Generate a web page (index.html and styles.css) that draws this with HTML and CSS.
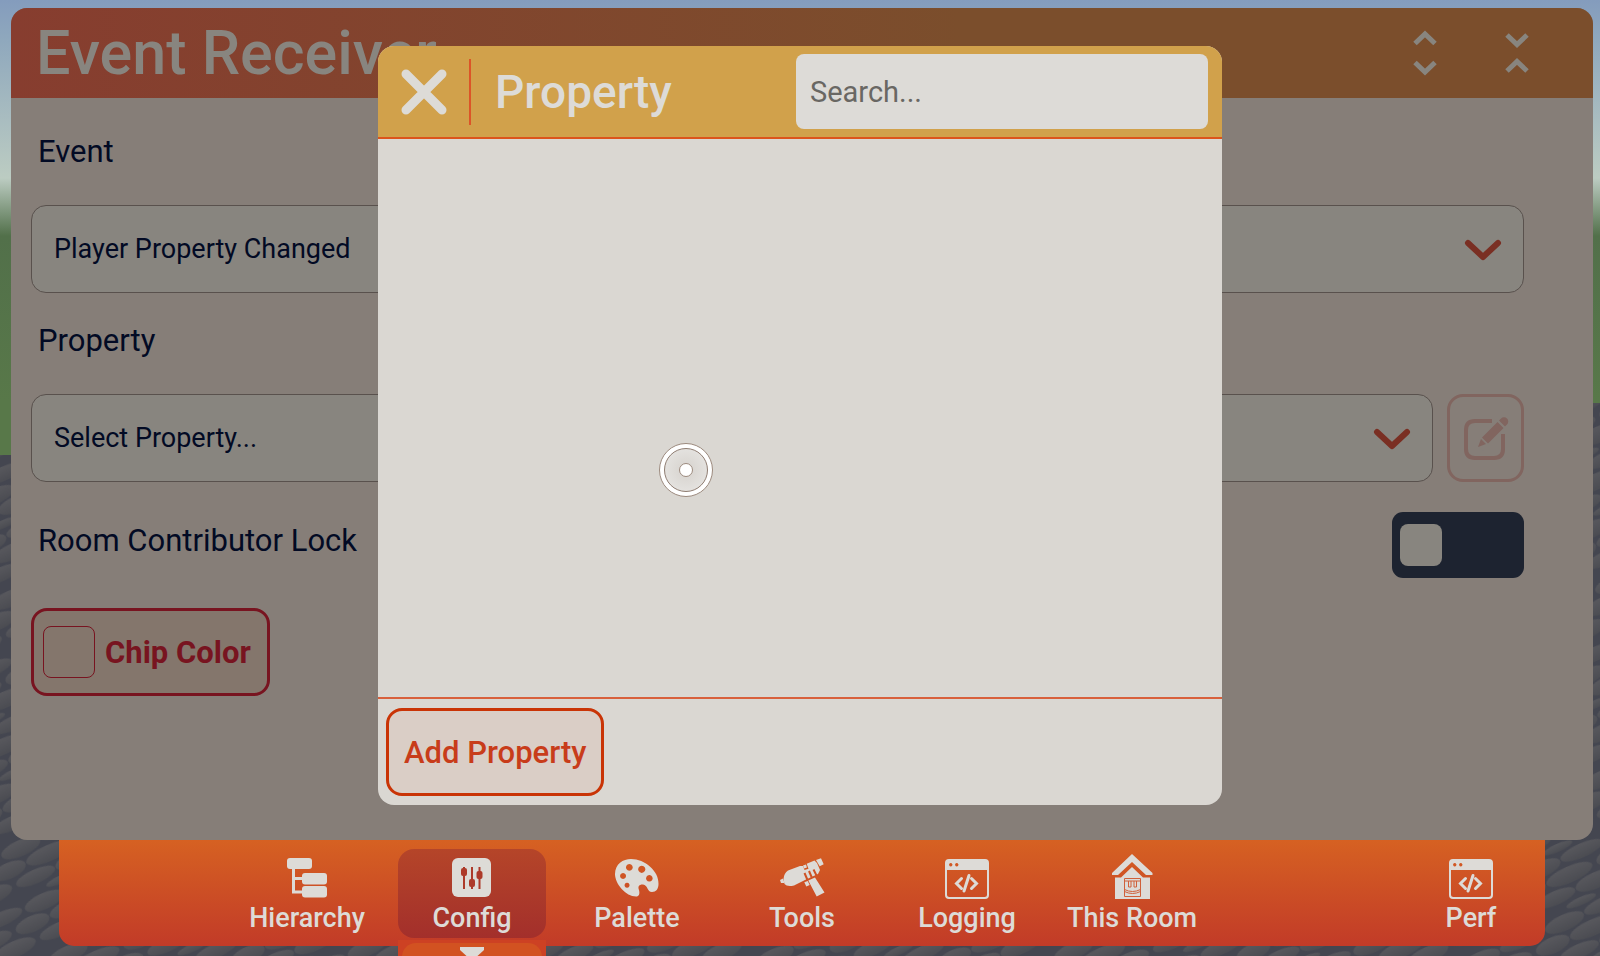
FILE: index.html
```html
<!DOCTYPE html>
<html lang="en">
<head>
    <meta charset="UTF-8">
    <meta name="viewport" content="width=device-width, initial-scale=1.0">
    <title>Event Receiver</title>
    <link rel="stylesheet" href="styles.css">
</head>
<body>

    <!-- Cobblestone ground -->
    <svg class="ground" aria-hidden="true">
        <defs>
            <linearGradient id="stone" x1="0" y1="0" x2="0" y2="1">
                <stop offset="0" stop-color="#58585d" />
                <stop offset="1" stop-color="#4b4c52" />
            </linearGradient>
            <pattern id="stones" width="92" height="58" patternUnits="userSpaceOnUse" patternTransform="rotate(-24)">
                <rect width="92" height="58" fill="#444650" />
                <g fill="url(#stone)">
                    <ellipse cx="22" cy="9" rx="21" ry="8" />
                    <ellipse cx="67" cy="8" rx="23" ry="7" />
                    <ellipse cx="2" cy="25" rx="18" ry="8" />
                    <ellipse cx="94" cy="25" rx="18" ry="8" />
                    <ellipse cx="46" cy="25" rx="25" ry="8" />
                    <ellipse cx="24" cy="41" rx="21" ry="7" />
                    <ellipse cx="68" cy="41" rx="22" ry="8" />
                    <ellipse cx="46" cy="54" rx="16" ry="4" />
                </g>
            </pattern>
        </defs>
        <rect width="100%" height="100%" fill="url(#stones)" />
    </svg>

    <main class="panel">
        <header class="panel-header">
            <h1>Event Receiver</h1>
            <button class="header-button" aria-label="Expand">
                <svg width="24" height="46" viewBox="0 0 24 46"><path d="M2 13.500 12 4l10 9.500M2 32.500 12 42l10-9.500" /></svg>
            </button>
            <button class="header-button" aria-label="Collapse">
                <svg width="24" height="46" viewBox="0 0 24 46"><path d="M2 5l10 9.500L22 5M2 41l10-9.500L22 41" /></svg>
            </button>
        </header>

        <div class="panel-body">
            <div class="field">
                <label for="eventSelect">Event</label>
                <div class="select-wrapper">
                    <select id="eventSelect">
                        <option>Player Property Changed</option>
                    </select>
                    <svg class="chevron" width="38" height="22" viewBox="0 0 38 22"><path d="M4 4l15 14L34 4" /></svg>
                </div>
            </div>

            <div class="field">
                <label for="propertySelect">Property</label>
                <div class="field-row">
                    <div class="select-wrapper">
                        <select id="propertySelect">
                            <option>Select Property...</option>
                        </select>
                        <svg class="chevron" width="38" height="22" viewBox="0 0 38 22"><path d="M4 4l15 14L34 4" /></svg>
                    </div>
                    <button class="edit-button" aria-label="Edit property" disabled>
                        <svg width="46" height="46" viewBox="0 0 46 46">
                            <path class="edit-box" d="M29 6H12Q3 6 3 15V34Q3 43 12 43H31Q40 43 40 34V19" />
                            <path class="edit-gap" d="M16 32 42 6" />
                            <path d="M15 32l3-8 5 5zM19 22.500 34.500 7l6 6L25 28.500zM36 5.500l2-2a4.200 4.200 0 0 1 6 6L42 11.500z" />
                        </svg>
                    </button>
                </div>
            </div>

            <div class="lock-row">
                <label for="lockToggle">Room Contributor Lock</label>
                <input type="checkbox" class="toggle" id="lockToggle">
            </div>

            <button class="chip-button"><span class="chip-swatch"></span>Chip Color</button>
        </div>
    </main>

    <nav class="toolbar">
        <div class="toolbar-main">
            <a class="tab" href="#hierarchy">
                <svg width="48" height="48" viewBox="0 0 48 48">
                    <path class="line" d="M10.500 15V39H20M10.500 25.500H20" />
                    <rect x="4" y="5" width="25" height="11" rx="3" />
                    <rect x="19" y="20" width="25" height="11.500" rx="3" />
                    <rect x="19" y="33" width="25" height="11.500" rx="3" />
                </svg>
                Hierarchy
            </a>
            <a class="tab active" href="#config">
                <svg width="48" height="48" viewBox="0 0 48 48">
                    <rect x="4" y="5" width="39" height="39" rx="6" />
                    <g class="cut">
                        <path class="slider-line" d="M16 14v22M24 14v22M31.500 14v22" />
                        <rect x="13" y="15" width="6" height="8" rx="2" />
                        <rect x="21" y="26" width="6" height="8" rx="2" />
                        <rect x="28.500" y="18" width="6" height="8" rx="2" />
                    </g>
                </svg>
                Config
                <span class="tab-pull"><svg width="24" height="14" viewBox="0 0 24 14"><path d="M0 0H24V3L12 14 0 3z" /></svg></span>
            </a>
            <a class="tab" href="#palette">
                <svg width="48" height="48" viewBox="0 0 48 48">
                    <path fill-rule="evenodd" d="M2 21C2 11 10 6 18 6C32 6 46 18 45.500 31C45.500 36 43 39 39 39C34 39 35 32 30 31.500C25 31.500 25 34 26 37C27 41 26 43.500 23 43.500C13 43.500 2 31 2 21ZM16.300 10.900a3.400 3.400 0 1 0 .1 0ZM28.700 12.700a3.600 3.600 0 1 0 .1 0ZM36.300 22a3.300 3.300 0 1 0 .1 0ZM10 20a3 3 0 1 0 .1 0ZM14 29.800a2.500 2.500 0 1 0 .1 0Z" />
                </svg>
                Palette
            </a>
            <a class="tab" href="#tools">
                <svg width="48" height="48" viewBox="0 0 48 48">
                    <path d="M5.500 26Q6 20 10 17.500L22 13l3 0 1.500 4 4-1.300-1.800-5L36.500 7.500 39 10 42 17 40 21 27 27 16 32.500Q9 34 6.500 31z" />
                    <path d="M25 12.500l3-1 1 3-3 1zM2 27l3-1.500 1.500 4.500-3.500 0zM38 7l5-1.700 2.700 6-4 2zM30.300 27.500l6.700-3 9.500 15-7.800 4zM26.300 29.300l3.400-1.300 2 4-3.400 1.500z" />
                    <path class="gun-slot" d="M26.500 20l3 7M31 18l3 7M35.500 16.500l3 6" />
                </svg>
                Tools
            </a>
            <a class="tab" href="#logging">
                <svg width="48" height="48" viewBox="0 0 48 48">
                    <path fill-rule="evenodd" d="M6 6H42Q46 6 46 10V42Q46 46 42 46H6Q2 46 2 42V10Q2 6 6 6ZM4 17V41.500Q4 44 6.500 44H41.500Q44 44 44 41.500V17ZM7.700 10a1.700 1.700 0 1 0 .1 0ZM13.700 10a1.700 1.700 0 1 0 .1 0Z" />
                    <path class="code" d="M18.500 25.500 13.500 30.500l5 5M26 22.500 21 38M28.500 25.500l5 5-5 5" />
                </svg>
                Logging
            </a>
            <a class="tab" href="#room">
                <svg width="48" height="48" viewBox="0 0 48 48">
                    <path d="M24 1 44.500 20V22H38L24 9 10 22H4V20z" />
                    <path d="M24 14 35 24.500H42V46H7V24.500H13z" />
                    <g class="face">
                        <path d="M16.500 25.500H32.500V43.500H16.500zM16.500 28H32.500M20.500 28v6h2.500v-6M26 28v6h2.500v-6M16.500 36.500q8 4 16 0M16.500 38.500q8 4 16 0" />
                    </g>
                </svg>
                This Room
            </a>
        </div>
        <a class="tab" href="#perf">
            <svg width="48" height="48" viewBox="0 0 48 48">
                <path fill-rule="evenodd" d="M6 6H42Q46 6 46 10V42Q46 46 42 46H6Q2 46 2 42V10Q2 6 6 6ZM4 17V41.500Q4 44 6.500 44H41.500Q44 44 44 41.500V17ZM7.700 10a1.700 1.700 0 1 0 .1 0ZM13.700 10a1.700 1.700 0 1 0 .1 0Z" />
                <path class="code" d="M18.500 25.500 13.500 30.500l5 5M26 22.500 21 38M28.500 25.500l5 5-5 5" />
            </svg>
            Perf
        </a>
    </nav>

    <!-- Property picker -->
    <div class="overlay">
        <section class="dialog" role="dialog" aria-labelledby="dialogTitle">
            <header class="dialog-header">
                <button class="close-button" aria-label="Close">
                    <svg width="46" height="46" viewBox="0 0 46 46"><path d="M5 5 41 41M41 5 5 41" /></svg>
                </button>
                <h2 id="dialogTitle">Property</h2>
                <input type="text" class="search" placeholder="Search..." aria-label="Search">
            </header>
            <div class="dialog-list"></div>
            <footer class="dialog-footer">
                <button class="add-button">Add Property</button>
            </footer>
        </section>
    </div>

    <!-- Pointer -->
    <svg class="pointer" width="56" height="56" viewBox="0 0 56 56" aria-hidden="true">
        <defs>
            <radialGradient id="pointerFill">
                <stop offset="0" stop-color="#d6d2cd" />
                <stop offset="1" stop-color="#e4e2df" />
            </radialGradient>
        </defs>
        <circle cx="28" cy="28" r="26.500" fill="#fff" stroke="#9c8a7e" />
        <circle cx="28" cy="28" r="21.500" fill="url(#pointerFill)" stroke="#8f7d72" />
        <circle cx="28" cy="28" r="6.500" fill="#fff" stroke="#9c8a7e" />
    </svg>

</body>
</html>
```
FILE: styles.css
```css
* {
    box-sizing: border-box;
}

body {
    position: relative;
    display: flex;
    flex-direction: column;
    min-height: 100vh;
    margin: 0;
    padding: 8px 7px 10px 11px;
    overflow: hidden;
    font-family: Roboto, sans-serif;
    color: #020a24;
    background: linear-gradient(#849cbd 0, #8fa8bd 40px, #bcccc2 178px, #52704a 236px, #587849 400px);
}

button, input, select {
    font-family: inherit;
    color: inherit;
}

button {
    cursor: pointer;
}

h1, h2 {
    margin: 0;
    font-weight: 500;
}

.ground {
    position: absolute;
    left: 0;
    bottom: 0;
    width: 100%;
    height: calc(100% - 403px);
    clip-path: polygon(0 52px, 50% 52px, 50% 0, 100% 0, 100% 100%, 0 100%);
}

/* Panel */
.panel {
    position: relative;
    flex: 1;
    display: flex;
    flex-direction: column;
    border-radius: 16px;
    overflow: hidden;
    background-color: #867e78;
}

.panel-header {
    display: flex;
    align-items: center;
    gap: 44px;
    height: 90px;
    padding: 0 52px 0 25px;
    color: #88857f;
    background: linear-gradient(90deg, #873d2f, #7b4e2c 60%);
}

.panel-header h1 {
    flex: 1;
    font-size: 61px;
    line-height: 92px;
}

.header-button {
    display: flex;
    justify-content: center;
    width: 48px;
    padding: 0;
    border: none;
    background: none;
}

.header-button path {
    fill: none;
    stroke: #88857f;
    stroke-width: 5;
}

.panel-body {
    display: flex;
    flex-direction: column;
    gap: 30px;
    padding: 36px 69px 36px 20px;
}

.panel-body label {
    padding-left: 7px;
    font-size: 31px;
    line-height: 36px;
}

.field {
    display: flex;
    flex-direction: column;
    gap: 35px;
}

.field-row {
    display: flex;
    gap: 14px;
}

.select-wrapper {
    position: relative;
    flex: 1;
}

.select-wrapper select {
    display: block;
    width: 100%;
    height: 88px;
    padding: 0 70px 0 22px;
    font-size: 27px;
    appearance: none;
    border: 1px solid #59514d;
    border-radius: 15px;
    background-color: #88857f;
}

.chevron {
    position: absolute;
    top: 34px;
    right: 22px;
    pointer-events: none;
}

.chevron path {
    fill: none;
    stroke: #7a2f23;
    stroke-width: 6;
    stroke-linecap: round;
    stroke-linejoin: round;
}

.edit-button {
    display: flex;
    align-items: center;
    justify-content: center;
    width: 77px;
    height: 88px;
    padding: 0;
    border: 3px solid #81655f;
    border-radius: 16px;
    background: none;
}

.edit-button path {
    fill: #81655f;
}

.edit-button .edit-box {
    fill: none;
    stroke: #81655f;
    stroke-width: 4;
}

.edit-button .edit-gap {
    stroke: #867e78;
    stroke-width: 11;
}

.lock-row {
    display: flex;
    justify-content: space-between;
}

.lock-row label {
    line-height: 58px;
}

.toggle {
    width: 132px;
    height: 66px;
    margin: 0;
    padding: 12px 8px;
    appearance: none;
    border-radius: 11px;
    background-color: #1d2330;
    cursor: pointer;
}

.toggle::before {
    content: "";
    display: block;
    width: 42px;
    height: 42px;
    border-radius: 8px;
    background-color: #88857f;
}

.toggle:checked::before {
    margin-left: auto;
}

.chip-button {
    display: flex;
    align-items: center;
    align-self: flex-start;
    gap: 10px;
    height: 88px;
    padding: 0 16px 0 9px;
    font-size: 31px;
    font-weight: 700;
    color: #781420;
    border: 3px solid #781420;
    border-radius: 16px;
    background-color: #84766c;
}

.chip-swatch {
    width: 52px;
    height: 52px;
    border: 1px solid #781420;
    border-radius: 8px;
}

/* Bottom toolbar */
.toolbar {
    position: relative;
    display: flex;
    gap: 17px;
    margin: 0 48px;
    padding: 9px 0 8px;
    border-radius: 0 0 15px 15px;
    background: linear-gradient(#d66122, #c23b28);
}

.toolbar-main {
    flex: 1;
    display: flex;
    justify-content: center;
    gap: 17px;
}

.tab {
    position: relative;
    display: flex;
    flex-direction: column;
    align-items: center;
    width: 148px;
    padding: 4px 0 3px;
    font-size: 27px;
    font-weight: 500;
    line-height: 34px;
    color: #dddbd7;
    text-decoration: none;
    white-space: nowrap;
    border-radius: 16px;
}

.tab.active {
    background: linear-gradient(#b54529, #a32f2b);
}

.tab svg {
    fill: #dddbd7;
}

.tab .line, .tab .code {
    fill: none;
    stroke: #dddbd7;
    stroke-width: 3;
}

.tab .code {
    stroke-linecap: round;
}

.tab .cut {
    fill: #ad3a2a;
}

.tab .slider-line {
    stroke: #ad3a2a;
    stroke-width: 2;
}

.tab .gun-slot {
    stroke: #cf5224;
    stroke-width: 2;
}

.tab .face {
    fill: none;
    stroke: #d0603a;
    stroke-width: 1;
}

/* Drawer handle under the open tab */
.tab-pull {
    position: absolute;
    top: 91px;
    left: 0;
    display: flex;
    justify-content: center;
    width: 100%;
    height: 40px;
    padding-top: 7px;
    background-color: #cd4123;
}

.tab-pull::before {
    content: "";
    position: absolute;
    inset: 3px 4px 0;
    border-radius: 14px 14px 0 0;
    background-color: #d25221;
}

.tab-pull svg {
    position: relative;
}

/* Property picker */
.overlay {
    position: absolute;
    inset: 46px 0 151px;
    display: flex;
    justify-content: center;
}

.dialog {
    display: flex;
    flex-direction: column;
    width: 90%;
    max-width: 844px;
    border-radius: 16px;
    overflow: hidden;
    background-color: #dad7d2;
}

.dialog-header {
    display: flex;
    align-items: center;
    padding: 8px 14px 8px 13px;
    border-bottom: 2px solid #dc541c;
    background-color: #d1a14b;
}

.close-button {
    display: flex;
    align-items: center;
    height: 66px;
    padding: 0 22px 0 10px;
    border: none;
    border-right: 2px solid #dc5428;
    background: none;
}

.close-button path {
    stroke: #dddbd7;
    stroke-width: 9;
    stroke-linecap: round;
}

.dialog-header h2 {
    flex: 1;
    padding-left: 24px;
    font-size: 46px;
    color: #dddbd7;
}

.search {
    width: 412px;
    height: 75px;
    padding: 0 14px;
    font-size: 29px;
    border: none;
    border-radius: 8px;
    background-color: #dddbd7;
}

.search::placeholder {
    color: #696763;
}

.dialog-list {
    flex: 1;
}

.dialog-footer {
    padding: 9px 8px;
    border-top: 2px solid #d8603c;
}

.add-button {
    height: 88px;
    padding: 0 15px;
    font-size: 31px;
    font-weight: 500;
    color: #c83c1a;
    border: 3px solid #c93406;
    border-radius: 16px;
    background-color: #dacec6;
}

.pointer {
    position: absolute;
    top: 442px;
    left: 658px;
    pointer-events: none;
}
```
